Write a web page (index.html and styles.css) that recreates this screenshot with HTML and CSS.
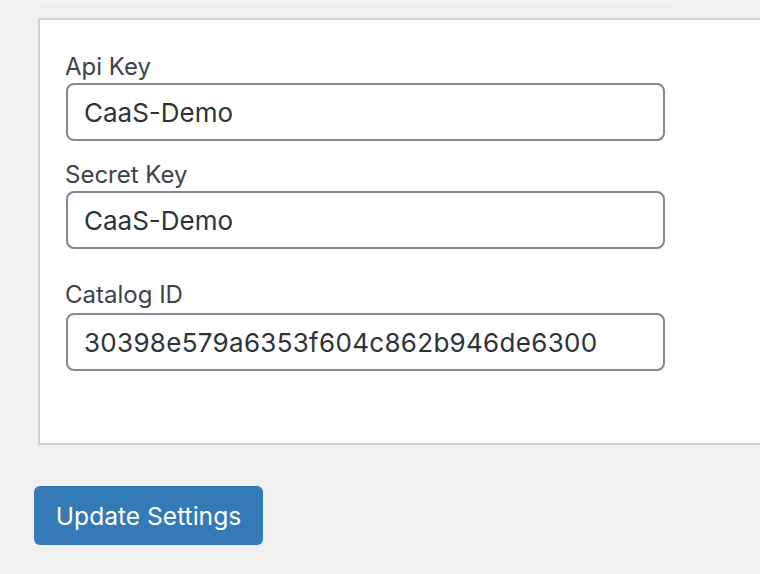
FILE: index.html
```html
<!DOCTYPE html>
<html lang="en">
<head>
<meta charset="utf-8">
<title>Settings</title>
<link rel="stylesheet" href="styles.css">
</head>
<body>
<div class="top-strip"></div>
<form class="settings">
  <div class="panel">
    <div class="field">
      <label class="label" for="api">Api Key</label>
      <input class="input" id="api" type="text" value="CaaS-Demo">
    </div>
    <div class="field">
      <label class="label" for="secret">Secret Key</label>
      <input class="input" id="secret" type="text" value="CaaS-Demo">
    </div>
    <div class="field field-spaced">
      <label class="label" for="catalog">Catalog ID</label>
      <input class="input input-id" id="catalog" type="text" value="30398e579a6353f604c862b946de6300">
    </div>
  </div>
  <button class="btn" type="button">Update Settings</button>
</form>
</body>
</html>
```
FILE: styles.css
```css
html, body {
  margin: 0;
  padding: 0;
  background: #f0f0f1;
  overflow: hidden;
}
body {
  font-family: Inter, "Liberation Sans", sans-serif;
  width: 760px;
  height: 574px;
}
.top-strip {
  margin-left: 38px;
  width: 637px;
  height: 1px;
  background: #f6f6f7;
}
.settings {
  display: flex;
  flex-direction: column;
  align-items: flex-start;
}
.panel {
  box-sizing: border-box;
  margin-top: 17px;
  margin-left: 38px;
  width: 722px;
  background: #fff;
  border: 2px solid #cdd0d4;
  border-right: 0;
  padding: 33px 0 72px 26px;
  display: flex;
  flex-direction: column;
}
.field {
  display: flex;
  flex-direction: column;
}
.field + .field {
  margin-top: 20px;
}
.field-spaced {
  margin-top: 32px !important;
}
.label {
  font-size: 24px;
  line-height: 28px;
  color: #3c434a;
  margin-bottom: 2px;
  margin-left: -1px;
}
.field-spaced .label {
  margin-bottom: 4px;
}
.input {
  box-sizing: border-box;
  width: 599px;
  height: 58px;
  margin: 0;
  border: 2px solid #7e8993;
  border-radius: 8px;
  padding: 0 17px 0 16px;
  font-family: Inter, "Liberation Sans", sans-serif;
  font-size: 26px;
  color: #2c3338;
  background: #fff;
  outline: none;
}
.input-id {
  letter-spacing: 0.3px;
}
.btn {
  margin-top: 41px;
  margin-left: 34px;
  width: 229px;
  height: 59px;
  border: 0;
  border-radius: 6px;
  background: #337ab7;
  color: #fff;
  font-family: Inter, "Liberation Sans", sans-serif;
  font-size: 24.6px;
  padding: 0;
}
```
